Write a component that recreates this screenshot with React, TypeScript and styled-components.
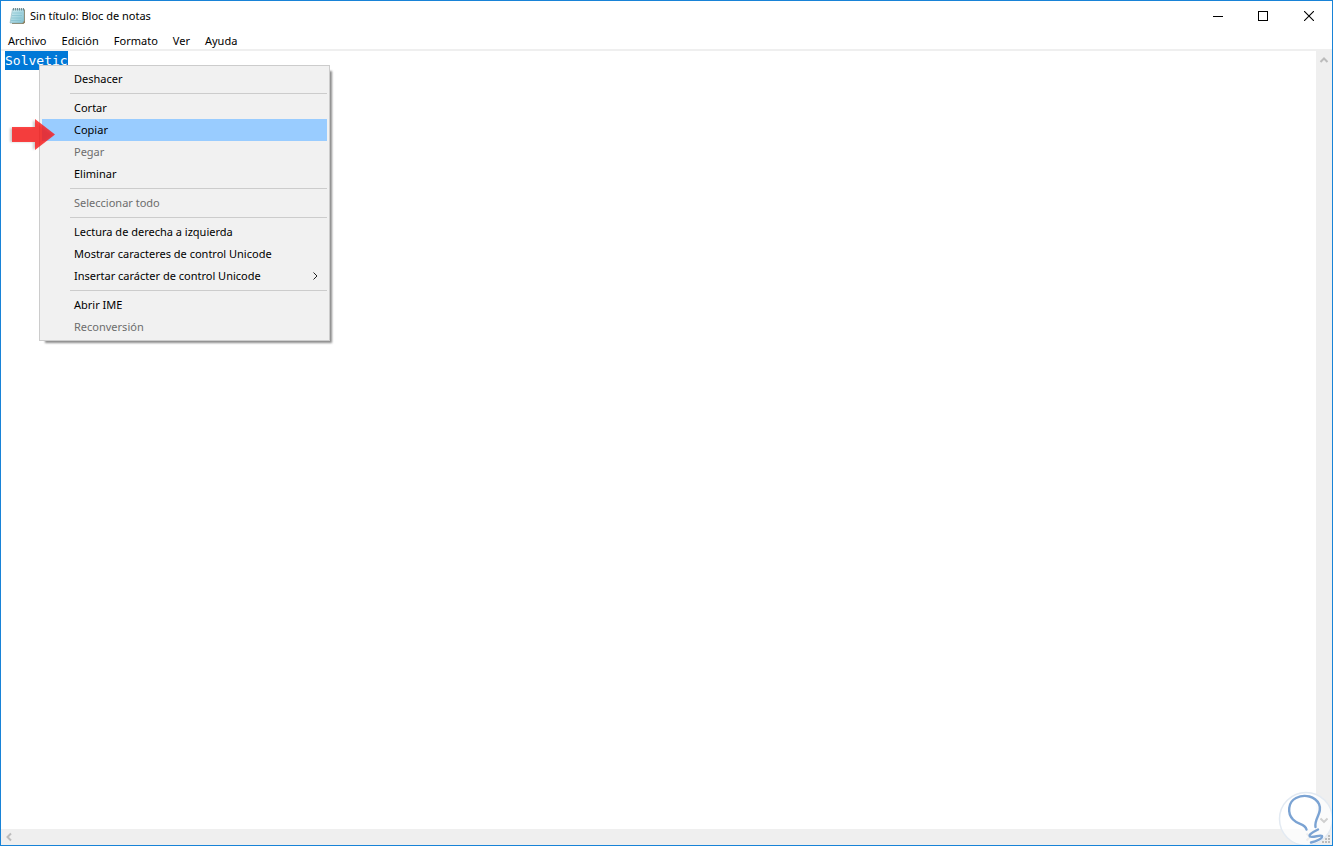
import React, { useEffect, useRef } from "react";
import styled, { createGlobalStyle } from "styled-components";

const GlobalStyle = createGlobalStyle`
  *, *::before, *::after { box-sizing: border-box; }
  body { margin: 0; background: #fff; }
  button { font: inherit; color: inherit; background: none; border: 0; margin: 0; }
`;

const Window = styled.div`
  position: relative;
  display: flex;
  flex-direction: column;
  min-height: 100vh;
  border: 1px solid #1883d7;
  background: #fff;
  color: #000;
  font: 11px/16px "Noto Sans", "Open Sans", sans-serif;
  overflow: hidden;
`;

const TitleBar = styled.header`
  display: flex;
  align-items: center;
  height: 30px;
  padding-left: 8px;
`;

const Title = styled.h1`
  flex: 1;
  margin: 0 0 0 4px;
  font-size: 11px;
  font-weight: 400;
`;

const WindowButton = styled.button`
  display: flex;
  align-items: center;
  justify-content: center;
  width: 46px;
  height: 30px;
  padding: 0;
`;

const MenuBar = styled.nav`
  display: flex;
  gap: 1px;
  height: 20px;
  border-bottom: 2px solid #efefef;
`;

const MenuButton = styled.button`
  padding: 0 7px;
  line-height: 20px;
`;

const Workspace = styled.main`
  position: relative;
  flex: 1;
  display: grid;
  grid-template-columns: minmax(0, 1fr) 16px;
  grid-template-rows: minmax(0, 1fr) 16px;
`;

const Editor = styled.textarea`
  width: 100%;
  height: 100%;
  margin: 0;
  padding: 0 4px;
  border: 0;
  outline: 0;
  resize: none;
  overflow: hidden;
  background: #fff;
  color: #000;
  font: 13px/19px "DejaVu Sans Mono", monospace;
  &::selection { background: #0078d7; color: #fff; }
`;

const ScrollTrack = styled.div<{ $horizontal?: boolean }>`
  display: flex;
  flex-direction: ${(p) => (p.$horizontal ? "row" : "column")};
  justify-content: space-between;
  background: #efefef;
`;

const ScrollButton = styled.button<{ $tall?: boolean }>`
  display: flex;
  align-items: center;
  justify-content: center;
  flex: none;
  width: 16px;
  height: ${(p) => (p.$tall ? 18 : 16)}px;
  padding: 0;
`;

const Corner = styled.div`
  display: flex;
  align-items: flex-end;
  justify-content: flex-end;
  background: #efefef;
`;

const ContextMenu = styled.div`
  position: absolute;
  top: 14px;
  left: 38px;
  width: 291px;
  padding: 2px;
  border: 1px solid #ccc;
  background: #f1f1f1;
  box-shadow: 4px 4px 2px -2px rgba(0, 0, 0, 0.45);
`;

const ContextItem = styled.button<{ $active?: boolean }>`
  display: flex;
  align-items: center;
  justify-content: space-between;
  width: 100%;
  height: 22px;
  padding: 0 4px 0 32px;
  background: ${(p) => (p.$active ? "#99ccff" : "transparent")};
  text-align: left;
  &:disabled { color: #6d6d6d; }
`;

const Separator = styled.hr`
  height: 1px;
  margin: 3px 0 3px 28px;
  border: 0;
  background: #ccc;
`;

const Pointer = styled.svg`
  position: absolute;
  top: 65px;
  left: 7px;
`;

const Badge = styled.svg`
  position: absolute;
  right: -1px;
  bottom: -1px;
`;

type Entry = { label: string; disabled?: boolean; active?: boolean; submenu?: boolean };

const menus = ["Archivo", "Edición", "Formato", "Ver", "Ayuda"];

const groups: Entry[][] = [
  [{ label: "Deshacer" }],
  [
    { label: "Cortar" },
    { label: "Copiar", active: true },
    { label: "Pegar", disabled: true },
    { label: "Eliminar" },
  ],
  [{ label: "Seleccionar todo", disabled: true }],
  [
    { label: "Lectura de derecha a izquierda" },
    { label: "Mostrar caracteres de control Unicode" },
    { label: "Insertar carácter de control Unicode", submenu: true },
  ],
  [{ label: "Abrir IME" }, { label: "Reconversión", disabled: true }],
];

const NotepadIcon = () => (
  <svg width="17" height="18" viewBox="0 0 17 18" aria-hidden="true">
    <defs>
      <linearGradient id="page" x1="0" y1="0" x2="1" y2="1">
        <stop offset="0" stopColor="#d3eef2" />
        <stop offset="1" stopColor="#7fc0d0" />
      </linearGradient>
    </defs>
    <path d="M4 2.500h12v13L14.500 17H3z" fill="#8d8060" />
    <path d="M3.500 2H15v11.500L13.500 16H1z" fill="url(#page)" stroke="#8fb4bc" strokeWidth=".6" />
    <path d="M3.500 6h10M3 8.500h10M2.500 11h10M2 13.500h10" stroke="#7dbccb" strokeWidth=".6" />
    <path d="M4.500 1v2.500M6.500 1v2.500M8.500 1v2.500M10.500 1v2.500M12.500 1v2.500M14.500 1v2.500" stroke="#5d767c" strokeWidth=".8" />
  </svg>
);

const chevrons = {
  up: "M4.500 10 8 6.500l3.500 3.500",
  down: "M4.500 6.500 8 10l3.500-3.500",
  left: "M10 4.500 6.500 8l3.500 3.500",
  right: "M6.500 4.500 10 8l-3.500 3.500",
};

const Chevron = ({ to, color = "#bcbcbc", weight = 2 }: { to: keyof typeof chevrons; color?: string; weight?: number }) => (
  <svg width="16" height="16" viewBox="0 0 16 16" fill="none" stroke={color} strokeWidth={weight} aria-hidden="true">
    <path d={chevrons[to]} />
  </svg>
);

export default function App() {
  const editor = useRef<HTMLTextAreaElement>(null);

  useEffect(() => {
    editor.current?.focus();
    editor.current?.select();
  }, []);

  return (
    <>
      <GlobalStyle />
      <Window>
        <TitleBar>
          <NotepadIcon />
          <Title>Sin título: Bloc de notas</Title>
          <WindowButton aria-label="Minimizar">
            <svg width="11" height="11" shapeRendering="crispEdges"><path d="M1 5.500h10" stroke="#000" /></svg>
          </WindowButton>
          <WindowButton aria-label="Maximizar">
            <svg width="10" height="10" shapeRendering="crispEdges"><path d="M.5.5h9v9h-9z" fill="none" stroke="#000" /></svg>
          </WindowButton>
          <WindowButton aria-label="Cerrar">
            <svg width="10" height="10"><path d="M0 0l10 10M10 0L0 10" stroke="#000" strokeWidth="1.100" /></svg>
          </WindowButton>
        </TitleBar>
        <MenuBar aria-label="Menú">
          {menus.map((m) => <MenuButton key={m}>{m}</MenuButton>)}
        </MenuBar>
        <Workspace>
          <Editor ref={editor} aria-label="Texto" defaultValue="Solvetic" spellCheck={false} />
          <ScrollTrack>
            <ScrollButton $tall aria-label="Subir"><Chevron to="up" /></ScrollButton>
            <ScrollButton $tall aria-label="Bajar"><Chevron to="down" /></ScrollButton>
          </ScrollTrack>
          <ScrollTrack $horizontal>
            <ScrollButton aria-label="Izquierda"><Chevron to="left" /></ScrollButton>
            <ScrollButton aria-label="Derecha"><Chevron to="right" /></ScrollButton>
          </ScrollTrack>
          <Corner>
            <svg width="12" height="12" fill="#bcbcbc" aria-hidden="true">
              <path d="M8 2h2v2H8zM8 5h2v2H8zM5 5h2v2H5zM8 8h2v2H8zM5 8h2v2H5zM2 8h2v2H2z" />
            </svg>
          </Corner>
          <ContextMenu role="menu">
            {groups.map((group, i) => (
              <React.Fragment key={i}>
                {i > 0 && <Separator />}
                {group.map((e) => (
                  <ContextItem key={e.label} role="menuitem" disabled={e.disabled} $active={e.active}>
                    {e.label}
                    {e.submenu && <Chevron to="right" color="#222" weight={1} />}
                  </ContextItem>
                ))}
              </React.Fragment>
            ))}
          </ContextMenu>
          <Pointer width="52" height="40" viewBox="0 0 52 40" aria-hidden="true">
            <defs>
              <filter id="soft" x="-20%" y="-20%" width="140%" height="140%"><feGaussianBlur stdDeviation="1" /></filter>
            </defs>
            <path d="M2 12h23V4l20 15-20 15v-8H2z" fill="#000" opacity=".2" filter="url(#soft)" />
            <path d="M4 11h23V3l20 15.500L27 34v-8H4z" fill="#ff1414" fillOpacity=".78" />
          </Pointer>
        </Workspace>
        <Badge width="56" height="56" viewBox="0 0 56 56" fill="none" aria-hidden="true">
          <circle cx="29" cy="29" r="26.500" fill="#fff" fillOpacity=".75" stroke="#e3eaf2" strokeWidth="1.500" />
          <path d="M43.500 28.500l3.500 3.500 3.500-3.500" stroke="#d0d0d0" strokeWidth="1.800" />
          <g stroke="#7ba3d3" strokeWidth="2.400" strokeLinecap="round" strokeLinejoin="round">
            <path d="M29.500 39.500C28 33 21 35 16 29.500C10 23 11 12 19 8C28 3.500 38 6.500 42 14C46 23 37 28 38.500 37" />
            <path d="M41 39.500C36 42 31 45 33 46.500C36 48 43 44.500 45 46C46 48.500 39 51.500 34 52.500" />
          </g>
        </Badge>
      </Window>
    </>
  );
}
